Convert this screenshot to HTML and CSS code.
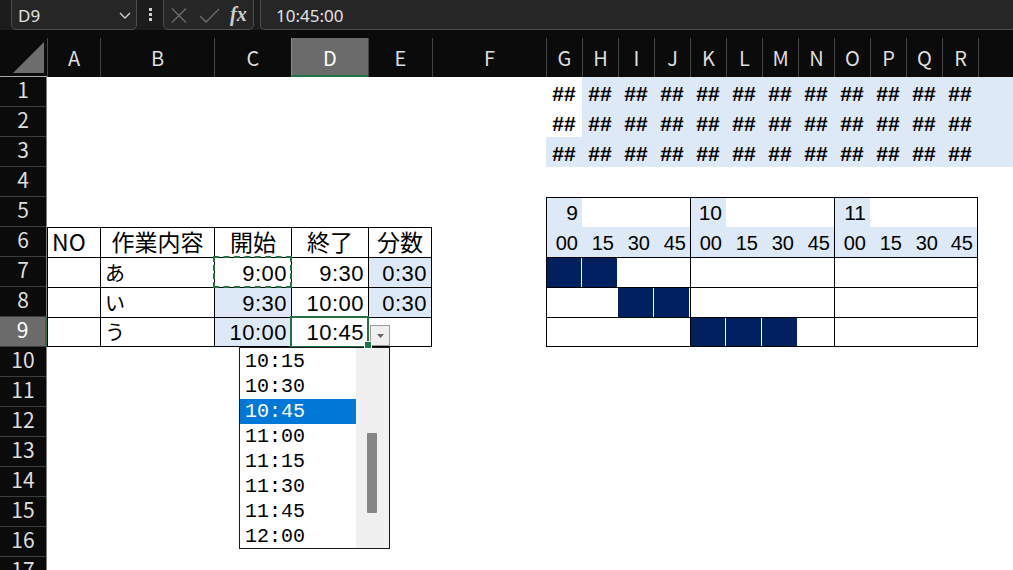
FILE: index.html
```html
<!DOCTYPE html>
<html lang="ja">
<head>
<meta charset="utf-8">
<title>作業時間ガントチャート</title>
<link rel="stylesheet" href="styles.css">
</head>
<body>
<div class="app">
  <header class="toolbar">
    <div class="namebox">
      <span class="ref">D9</span>
      <svg class="chev" width="12" height="7" viewBox="0 0 12 7"><polyline points="1,1 6,6 11,1"/></svg>
    </div>
    <div class="grip"><i></i><i></i><i></i></div>
    <div class="fxbox">
      <svg class="ico cancel" width="16" height="15" viewBox="0 0 16 15"><path d="M1 0.5L15 14.5M15 0.5L1 14.5"/></svg>
      <svg class="ico enter" width="21" height="15" viewBox="0 0 21 15"><path d="M1 8L7 14L20 1"/></svg>
      <span class="fx">fx</span>
    </div>
    <div class="formula">10:45:00</div>
  </header>

  <div class="colheads">
    <div class="corner"><svg width="47" height="39" viewBox="0 0 47 39"><polygon points="44,4 44,35 13,35"/></svg></div>
    <div class="ch w53">A</div>
    <div class="ch w114">B</div>
    <div class="ch w77">C</div>
    <div class="ch w77 sel">D</div>
    <div class="ch w64">E</div>
    <div class="ch w114">F</div>
    <div class="ch w36">G</div>
    <div class="ch w36">H</div>
    <div class="ch w36">I</div>
    <div class="ch w36">J</div>
    <div class="ch w36">K</div>
    <div class="ch w36">L</div>
    <div class="ch w36">M</div>
    <div class="ch w36">N</div>
    <div class="ch w36">O</div>
    <div class="ch w36">P</div>
    <div class="ch w36">Q</div>
    <div class="ch w36">R</div>
    <div class="ch rest"></div>
  </div>

  <div class="main">
    <div class="rowheads">
      <div class="rh">1</div>
      <div class="rh">2</div>
      <div class="rh">3</div>
      <div class="rh">4</div>
      <div class="rh">5</div>
      <div class="rh">6</div>
      <div class="rh">7</div>
      <div class="rh">8</div>
      <div class="rh sel">9</div>
      <div class="rh">10</div>
      <div class="rh">11</div>
      <div class="rh">12</div>
      <div class="rh">13</div>
      <div class="rh">14</div>
      <div class="rh">15</div>
      <div class="rh">16</div>
      <div class="rh">17</div>
    </div>

    <div class="sheet">
      <!-- G1:R3 : columns too narrow for their values -->
      <div class="hashes">
        <div class="hc plain">##</div><div class="hc">##</div><div class="hc">##</div><div class="hc">##</div><div class="hc">##</div><div class="hc">##</div><div class="hc">##</div><div class="hc">##</div><div class="hc">##</div><div class="hc">##</div><div class="hc">##</div><div class="hc">##</div>
        <div class="hc plain">##</div><div class="hc">##</div><div class="hc">##</div><div class="hc">##</div><div class="hc">##</div><div class="hc">##</div><div class="hc">##</div><div class="hc">##</div><div class="hc">##</div><div class="hc">##</div><div class="hc">##</div><div class="hc">##</div>
        <div class="hc">##</div><div class="hc">##</div><div class="hc">##</div><div class="hc">##</div><div class="hc">##</div><div class="hc">##</div><div class="hc">##</div><div class="hc">##</div><div class="hc">##</div><div class="hc">##</div><div class="hc">##</div><div class="hc">##</div>
      </div>

      <!-- A6:E9 : task list -->
      <div class="data">
        <div class="c jp">NO</div>
        <div class="c jp ctr">作業内容</div>
        <div class="c jp ctr">開始</div>
        <div class="c jp ctr">終了</div>
        <div class="c jp ctr">分数</div>

        <div class="c"></div>
        <div class="c jp kana">あ</div>
        <div class="c num copy">9:00</div>
        <div class="c num">9:30</div>
        <div class="c num tint">0:30</div>

        <div class="c"></div>
        <div class="c jp kana">い</div>
        <div class="c num tint">9:30</div>
        <div class="c num">10:00</div>
        <div class="c num tint">0:30</div>

        <div class="c"></div>
        <div class="c jp kana">う</div>
        <div class="c num tint">10:00</div>
        <div class="c num active">10:45
          <span class="dd-btn"><svg width="7" height="4" viewBox="0 0 7 4"><polygon points="0,0 7,0 3.5,4"/></svg></span>
          <div class="dd-list">
            <ul class="opts">
              <li>10:15</li>
              <li>10:30</li>
              <li class="on">10:45</li>
              <li>11:00</li>
              <li>11:15</li>
              <li>11:30</li>
              <li>11:45</li>
              <li>12:00</li>
            </ul>
            <div class="track"><div class="thumb"></div></div>
          </div>
        </div>
        <div class="c"></div>
      </div>

      <!-- G5:R9 : 15-minute timeline -->
      <div class="gantt">
        <div class="g tint">9</div><div class="g"></div><div class="g"></div><div class="g"></div>
        <div class="g tint">10</div><div class="g"></div><div class="g"></div><div class="g"></div>
        <div class="g tint">11</div><div class="g"></div><div class="g"></div><div class="g"></div>

        <div class="g tint mm">00</div><div class="g tint mm">15</div><div class="g tint mm">30</div><div class="g tint mm">45</div>
        <div class="g tint mm">00</div><div class="g tint mm">15</div><div class="g tint mm">30</div><div class="g tint mm">45</div>
        <div class="g tint mm">00</div><div class="g tint mm">15</div><div class="g tint mm">30</div><div class="g tint mm">45</div>

        <div class="g on"></div><div class="g on"></div><div class="g"></div><div class="g"></div>
        <div class="g"></div><div class="g"></div><div class="g"></div><div class="g"></div>
        <div class="g"></div><div class="g"></div><div class="g"></div><div class="g"></div>

        <div class="g"></div><div class="g"></div><div class="g on"></div><div class="g on"></div>
        <div class="g"></div><div class="g"></div><div class="g"></div><div class="g"></div>
        <div class="g"></div><div class="g"></div><div class="g"></div><div class="g"></div>

        <div class="g"></div><div class="g"></div><div class="g"></div><div class="g"></div>
        <div class="g on"></div><div class="g on"></div><div class="g on"></div><div class="g"></div>
        <div class="g"></div><div class="g"></div><div class="g"></div><div class="g"></div>
      </div>
    </div>
  </div>
</div>
</body>
</html>
```

FILE: styles.css
```css
* { box-sizing: border-box; }

html, body {
  margin: 0;
  padding: 0;
  width: 1013px;
  height: 570px;
  overflow: hidden;
  background: #0b0b0b;
}

.app {
  width: 1013px;
  height: 570px;
  display: flex;
  flex-direction: column;
  font-family: "Noto Sans", "Noto Sans CJK JP", sans-serif;
}

/* ---------- formula bar ---------- */
.toolbar {
  height: 30px;
  flex: none;
  display: flex;
  padding-left: 11px;
  background: #1c1c1c;
  color: #e2e2e2;
}

.namebox,
.fxbox,
.formula {
  height: 36px;
  margin-top: -6px;
  padding-top: 6px;
  background: #262626;
  border: 1px solid #4e4e4e;
  border-radius: 5px;
  display: flex;
  align-items: center;
}

.namebox {
  width: 126px;
  padding-left: 6px;
  padding-right: 5px;
  justify-content: space-between;
}

.ref {
  font-size: 17px;
  line-height: 1;
}

.chev polyline {
  fill: none;
  stroke: #cfcfcf;
  stroke-width: 1.4;
}

.grip {
  width: 26px;
  display: flex;
  flex-direction: column;
  align-items: center;
  justify-content: center;
  gap: 2px;
  padding-bottom: 2px;
}

.grip i {
  display: block;
  width: 3px;
  height: 3px;
  background: #cfcfcf;
}

.fxbox {
  width: 91px;
  padding-left: 7px;
}

.ico path {
  fill: none;
  stroke: #6c6c6c;
  stroke-width: 1.4;
}

.cancel { margin-right: 12px; }
.enter { margin-right: 10px; }

.fx {
  font-family: "Liberation Serif", "DejaVu Serif", serif;
  font-style: italic;
  font-weight: bold;
  font-size: 20px;
  line-height: 1;
  color: #cfcfcf;
  margin-top: -2px;
}

.formula {
  flex: 1;
  margin-left: 6px;
  border-right: none;
  border-radius: 5px 0 0 5px;
  padding-left: 15px;
  font-size: 17px;
}

/* ---------- column headers ---------- */
.colheads {
  flex: none;
  height: 39px;
  margin-top: 8px;
  display: flex;
  background: #0b0b0b;
  color: #dedede;
  font-family: "Noto Sans CJK JP", "Noto Sans", sans-serif;
  font-size: 20px;
}

.corner {
  width: 47px;
  flex: none;
  border-bottom: 1px solid #a9a9a9;
}

.corner polygon { fill: #6d6d6d; }

.ch {
  flex: none;
  display: flex;
  align-items: center;
  justify-content: center;
  border-left: 1px solid #454545;
  line-height: 1;
  padding-top: 1px;
}

.ch.sel {
  background: #6b6b6b;
  color: #fff;
  border-left-color: #8a8a8a;
  border-bottom: 2px solid #217346;
  padding-top: 3px;
}

.w36 { width: 36px; }
.w53 { width: 53px; }
.w64 { width: 64px; }
.w77 { width: 77px; }
.w114 { width: 114px; }
.rest { flex: 1; }

/* ---------- body ---------- */
.main {
  flex: 1;
  display: flex;
  min-height: 0;
}

.rowheads {
  width: 47px;
  flex: none;
  display: flex;
  flex-direction: column;
  background: #0b0b0b;
  border-right: 1px solid #7c7c7c;
  color: #dedede;
  font-family: "Noto Sans CJK JP", "Noto Sans", sans-serif;
  font-size: 21px;
}

.rh {
  height: 30px;
  flex: none;
  display: flex;
  align-items: center;
  justify-content: center;
  border-bottom: 1px solid #3d3d3d;
  line-height: 1;
  padding-bottom: 4px;
}

.rh.sel {
  background: #6b6b6b;
  color: #fff;
  margin-right: -1px;
  border-right: 2px solid #217346;
}

.sheet {
  flex: 1;
  background: #fff;
  display: grid;
  grid-template-columns: 53px 114px 77px 77px 64px 114px repeat(12, 36px) 1fr;
  grid-template-rows: repeat(17, 30px);
  font-family: "Liberation Sans", "Noto Sans CJK JP", sans-serif;
  font-size: 21px;
  color: #000;
  overflow: hidden;
}

/* G1:R3 overflow markers */
.hashes {
  grid-column: 7 / -1;
  grid-row: 1 / 4;
  background: #dde9f6;
  display: grid;
  grid-template-columns: repeat(12, 36px);
  grid-auto-rows: 30px;
}

.hc {
  display: flex;
  align-items: flex-end;
  justify-content: center;
  padding-bottom: 3px;
  font-weight: bold;
  line-height: 1;
}

.hc.plain { background: #fff; }

/* A6:E9 task table */
.data {
  grid-column: 1 / 6;
  grid-row: 6 / 10;
  display: grid;
  grid-template-columns: 53px 114px 77px 77px 64px;
  grid-template-rows: repeat(4, 30px);
}

.c {
  display: flex;
  align-items: flex-end;
  padding: 0 4px 2px 4px;
  border-left: 1px solid #000;
  border-top: 1px solid #000;
  line-height: 1;
  white-space: nowrap;
}

.data > :nth-child(5n) { border-right: 1px solid #000; }
.data > :nth-child(n+16) { border-bottom: 1px solid #000; }

.jp {
  font-family: "Noto Sans CJK JP", sans-serif;
  font-size: 23px;
  padding-bottom: 4px;
}

.jp.kana {
  font-size: 20px;
  padding-bottom: 4px;
}

.ctr { justify-content: center; }

.num {
  justify-content: flex-end;
  font-size: 22px;
  letter-spacing: 0.5px;
}

.tint { background: #dde9f6; }

/* copy marquee around C7 */
.copy {
  outline: 2px dashed #217346;
  outline-offset: -1px;
  position: relative;
  z-index: 1;
}

/* active cell D9 with its validation list */
.active {
  outline: 2px solid #217346;
  outline-offset: -1px;
  position: relative;
  z-index: 2;
}

.active::after {
  content: "";
  position: absolute;
  right: -4px;
  bottom: -3px;
  width: 6px;
  height: 6px;
  background: #217346;
  border: 1px solid #fff;
}

.dd-btn {
  position: absolute;
  left: 78px;
  top: 7px;
  width: 20px;
  height: 21px;
  background: #efefef;
  border: 1px solid #9c9c9c;
  display: flex;
  align-items: center;
  justify-content: center;
  letter-spacing: 0;
}

.dd-btn polygon { fill: #666; }

.dd-list {
  position: absolute;
  left: -53px;
  top: 29px;
  width: 151px;
  height: 202px;
  background: #fff;
  border: 1px solid #1a1a1a;
  display: flex;
  letter-spacing: 0;
}

.opts {
  list-style: none;
  margin: 0;
  padding: 1px 0 0 0;
  width: 116px;
  flex: none;
}

.opts li {
  height: 25px;
  line-height: 25px;
  padding-left: 5px;
  font-family: "Liberation Mono", "DejaVu Sans Mono", monospace;
  font-size: 20px;
  color: #000;
}

.opts li.on {
  background: #0078d7;
  color: #fff;
}

.track {
  flex: 1;
  background: #f0f0f0;
  padding: 85px 0 0 11px;
}

.thumb {
  width: 10px;
  height: 80px;
  background: #868686;
  border-radius: 1px;
}

/* G5:R9 timeline */
.gantt {
  grid-column: 7 / 19;
  grid-row: 5 / 10;
  display: grid;
  grid-template-columns: repeat(12, 36px);
  grid-template-rows: repeat(5, 30px);
}

.g {
  display: flex;
  align-items: flex-end;
  justify-content: flex-end;
  padding: 0 4px 4px 0;
  line-height: 1;
}

.g.mm { font-size: 20px; }

.gantt > :nth-child(-n+12) { border-top: 1px solid #000; }
.gantt > :nth-child(n+25) { border-top: 1px solid #000; }
.gantt > :nth-child(n+49) { border-bottom: 1px solid #000; }
.gantt > :nth-child(4n+1) { border-left: 1px solid #000; }
.gantt > :nth-child(12n) { border-right: 1px solid #000; }

.g.on {
  background: linear-gradient(#002060, #002060) left top / calc(100% - 1px) 100% no-repeat;
}
```
